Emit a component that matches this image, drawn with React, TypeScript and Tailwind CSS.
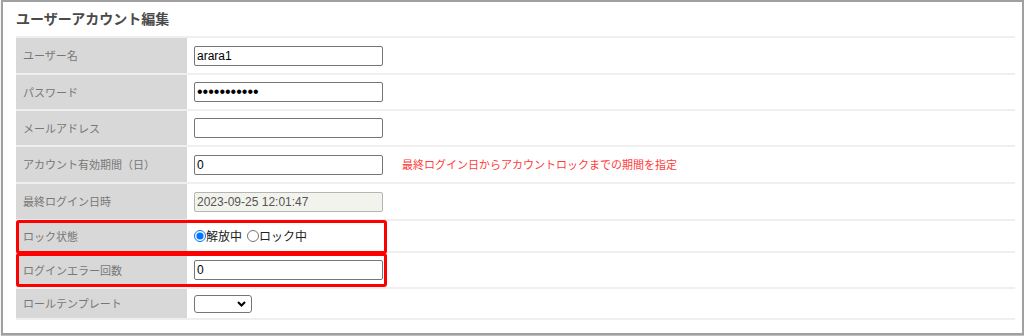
import React from "react";

const jp = { fontFamily: '"Noto Sans CJK JP", "Noto Sans", sans-serif' };
const latin = { fontFamily: '"Liberation Sans", "Noto Sans CJK JP", sans-serif' };

function Row({ label, h, last, children }: { label: string; h: string; last?: boolean; children: React.ReactNode }) {
  return (
    <div className={`flex border-t-2 border-[#efefef] ${last ? "border-b-2" : ""} ${h}`}>
      <div className="w-[171px] shrink-0 bg-[#d8d8d8] pl-[7px] flex items-center text-[11px] text-[#777]" style={jp}>
        {label}
      </div>
      <div className="flex-1 flex items-center pl-[7px]">{children}</div>
    </div>
  );
}

function TextBox({ value, type = "text", disabled, big }: { value: string; type?: string; disabled?: boolean; big?: boolean }) {
  return (
    <input
      readOnly
      type={type}
      value={value}
      className={`w-[189px] h-[20px] rounded-[2px] border px-[2px] outline-none ${big ? "text-[16px] leading-[16px]" : "text-[12px]"} ${
        disabled ? "border-[#b5b5b5] bg-[#f3f3ed] text-[#555] text-[11.5px]" : "border-[#767676] bg-white text-black"
      }`}
      style={latin}
    />
  );
}

export default function App() {
  return (
    <div className="w-[1024px] h-[336px] bg-white">
      <div className="ml-[1px] w-[1023px] h-[335px] border-2 border-[#a0a0a0] shadow-[0_1px_1px_rgba(0,0,0,0.25)] pl-[13px] pr-[7px]">
        <div className="h-[34px] pt-[6px] text-[14px] leading-[20px] font-bold text-[#4a4a4a]" style={jp}>
          ユーザーアカウント編集
        </div>
        <div className="relative">
          <Row label="ユーザー名" h="h-[37px]">
            <TextBox value="arara1" />
          </Row>
          <Row label="パスワード" h="h-[36px]">
            <TextBox value="arara123456" type="password" big />
          </Row>
          <Row label="メールアドレス" h="h-[36px]">
            <TextBox value="" />
          </Row>
          <Row label="アカウント有効期間（日）" h="h-[37px]">
            <TextBox value="0" />
            <span className="ml-[19px] text-[11px] text-[#ff3b3b]" style={jp}>
              最終ログイン日からアカウントロックまでの期間を指定
            </span>
          </Row>
          <Row label="最終ログイン日時" h="h-[37px]">
            <TextBox value="2023-09-25 12:01:47" disabled />
          </Row>
          <Row label="ロック状態" h="h-[32px]">
            <label className="flex items-center text-[12px] text-[#222]" style={jp}>
              <input type="radio" name="lock" defaultChecked className="m-0 w-[12px] h-[12px] accent-[#0075ff]" />
              <span>解放中</span>
            </label>
            <label className="ml-[5px] flex items-center text-[12px] text-[#222]" style={jp}>
              <input type="radio" name="lock" className="m-0 w-[12px] h-[12px]" />
              <span>ロック中</span>
            </label>
          </Row>
          <Row label="ログインエラー回数" h="h-[36px]">
            <TextBox value="0" />
          </Row>
          <Row label="ロールテンプレート" h="h-[33px]" last>
            <div className="w-[58px] h-[18px] rounded-[3px] border border-[#767676] bg-white flex items-center justify-end pr-[5px]">
              <svg width="9" height="6" viewBox="0 0 9 6">
                <path d="M1 1 L4.5 4.5 L8 1" stroke="#000" strokeWidth="2" fill="none" />
              </svg>
            </div>
          </Row>
          <div className="absolute left-0 top-[184px] w-[371px] h-[34px] border-[3px] border-[#ff0000] rounded-[3px]" />
          <div className="absolute left-0 top-[217px] w-[371px] h-[34px] border-[3px] border-[#ff0000] rounded-[3px]" />
        </div>
      </div>
    </div>
  );
}
